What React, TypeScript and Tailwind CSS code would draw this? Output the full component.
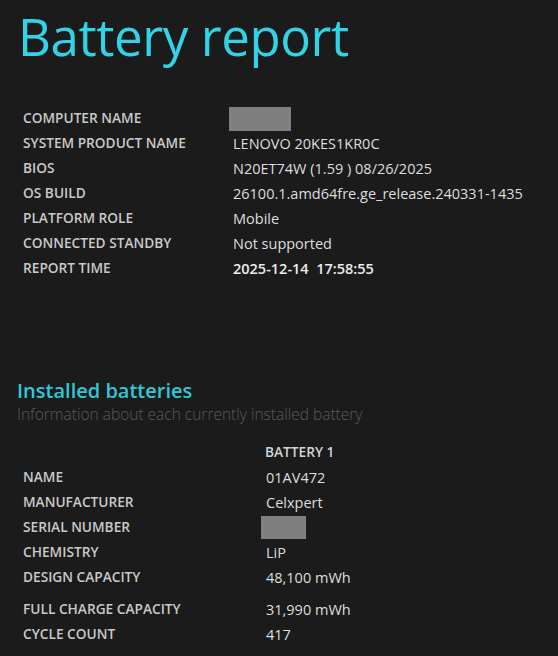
const FONT = "font-['Open_Sans','Noto_Sans',sans-serif]"

type Row = { label: string; value?: string; hidden?: boolean; strong?: boolean }

const SYSTEM_INFO: Row[] = [
  { label: 'COMPUTER NAME', hidden: true },
  { label: 'SYSTEM PRODUCT NAME', value: 'LENOVO 20KES1KR0C' },
  { label: 'BIOS', value: 'N20ET74W (1.59 ) 08/26/2025' },
  { label: 'OS BUILD', value: '26100.1.amd64fre.ge_release.240331-1435' },
  { label: 'PLATFORM ROLE', value: 'Mobile' },
  { label: 'CONNECTED STANDBY', value: 'Not supported' },
  { label: 'REPORT TIME', value: '2025-12-14  17:58:55', strong: true },
]

const BATTERY: Row[] = [
  { label: 'NAME', value: '01AV472' },
  { label: 'MANUFACTURER', value: 'Celxpert' },
  { label: 'SERIAL NUMBER', hidden: true },
  { label: 'CHEMISTRY', value: 'LiP' },
  { label: 'DESIGN CAPACITY', value: '48,100 mWh' },
]

const BATTERY_2: Row[] = [
  { label: 'FULL CHARGE CAPACITY', value: '31,990 mWh' },
  { label: 'CYCLE COUNT', value: '417' },
]

function InfoRow({ row, labelWidth, box }: { row: Row; labelWidth: string; box: string }) {
  return (
    <div className="flex h-[25px] items-center">
      <div className={`${labelWidth} shrink-0 text-[13.7px] font-semibold text-[#c9c9c9]`}>{row.label}</div>
      {row.hidden ? (
        <div className={`${box} bg-[#7f7f7f]`} />
      ) : (
        <div
          className={`text-[14.5px] whitespace-pre ${
            row.strong ? 'font-semibold text-[#ececec]' : 'text-[#dedede]'
          }`}
        >
          {row.value}
        </div>
      )}
    </div>
  )
}

export default function App() {
  return (
    <div className={`${FONT} min-h-[656px] w-[558px] bg-[#1b1b1b] overflow-hidden`}>
      <h1 className="pl-[18px] text-[51px] leading-[72px] text-[#30d4e6] tracking-[-0.4px]">
        Battery report
      </h1>

      <div className="mt-[34px] pl-[23px]">
        {SYSTEM_INFO.map(r => (
          <InfoRow key={r.label} row={r} labelWidth="w-[210px]" box="h-[24px] w-[62px] -ml-[4px]" />
        ))}
      </div>

      <div className="mt-[97px] pl-[17px]">
        <h2 className="text-[20px] font-semibold leading-[26px] text-[#34c6d6]">Installed batteries</h2>
        <p className="text-[15.5px] font-light leading-[20px] text-[#5a5a5a]">
          Information about each currently installed battery
        </p>
      </div>

      <div className="pl-[23px] mt-[16px]">
        <div className="flex h-[25px] items-center">
          <div className="w-[242px]" />
          <div className="text-[13.7px] font-semibold text-[#d4d4d4]">BATTERY 1</div>
        </div>
        {BATTERY.map(r => (
          <InfoRow key={r.label} row={r} labelWidth="w-[243px]" box="h-[23px] w-[45px] -ml-[5px]" />
        ))}
        <div className="h-[7px]" />
        {BATTERY_2.map(r => (
          <InfoRow key={r.label} row={r} labelWidth="w-[243px]" box="h-[23px] w-[45px]" />
        ))}
      </div>
    </div>
  )
}
